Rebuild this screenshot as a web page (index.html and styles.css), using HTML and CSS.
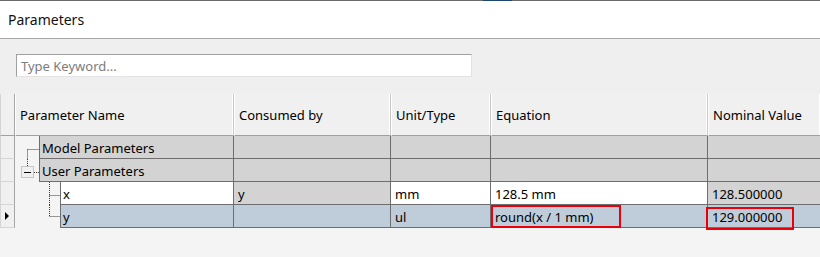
FILE: index.html
```html
<html>
<head>
  <title>Parameters</title>
  <link rel="stylesheet" href="styles.css">
</head>
<body>
  <div class="topline"><span class="tab-mark"></span></div>
  <div class="titlebar">Parameters</div>
  <div class="panel">
    <div class="search">
      <input type="text" placeholder="Type Keyword...">
    </div>
    <div class="grid">
      <!-- header -->
      <div class="rh rh-head"></div>
      <div class="hd">Parameter Name</div>
      <div class="hd">Consumed by</div>
      <div class="hd">Unit/Type</div>
      <div class="hd">Equation</div>
      <div class="hd">Nominal Value</div>

      <!-- Model Parameters -->
      <div class="rh"></div>
      <div class="name">
        <svg class="tree t1" width="24" height="23">
          <line x1="12.5" y1="13.5" x2="24" y2="13.5" />
          <line x1="12.5" y1="13.5" x2="12.5" y2="23" />
        </svg>
        <div class="cell gray first">Model Parameters</div>
      </div>
      <div class="cell gray"></div>
      <div class="cell gray"></div>
      <div class="cell gray"></div>
      <div class="cell gray"></div>

      <!-- User Parameters -->
      <div class="rh"></div>
      <div class="name">
        <svg class="tree t1" width="24" height="23">
          <line x1="12.5" y1="0" x2="12.5" y2="7" />
          <rect x="6.5" y="7.5" width="12" height="11" class="box" />
          <line x1="9" y1="13.5" x2="16" y2="13.5" class="minus" />
          <line x1="19" y1="13.5" x2="24" y2="13.5" />
        </svg>
        <div class="cell gray first">User Parameters</div>
      </div>
      <div class="cell gray"></div>
      <div class="cell gray"></div>
      <div class="cell gray"></div>
      <div class="cell gray"></div>

      <!-- x -->
      <div class="rh"></div>
      <div class="name">
        <svg class="tree t2" width="45" height="23">
          <line x1="34.5" y1="0" x2="34.5" y2="23" />
          <line x1="34.5" y1="13.5" x2="45" y2="13.5" />
        </svg>
        <div class="cell white first">x</div>
      </div>
      <div class="cell gray">y</div>
      <div class="cell white">mm</div>
      <div class="cell white">128.5 mm</div>
      <div class="cell gray">128.500000</div>

      <!-- y -->
      <div class="rh current"><span class="arrow"></span></div>
      <div class="name">
        <svg class="tree t2" width="45" height="23">
          <line x1="34.5" y1="0" x2="34.5" y2="11.5" />
          <line x1="34.5" y1="11.5" x2="45" y2="11.5" />
        </svg>
        <div class="cell sel first">y</div>
      </div>
      <div class="cell sel"></div>
      <div class="cell sel">ul</div>
      <div class="cell sel">round(x / 1 mm)<span class="mark mark-eq"></span></div>
      <div class="cell sel">129.000000<span class="mark mark-nom"></span></div>
    </div>
  </div>
</body>
</html>
```

FILE: styles.css
```css
/* Reset */
body, div, input, span {
  margin: 0;
  padding: 0;
  box-sizing: border-box;
}

body {
  font-family: "Noto Sans", "Open Sans", sans-serif;
  font-size: 13px;
  color: #000;
  background: #f4f4f4;
  width: 820px;
  height: 257px;
  overflow: hidden;
}

/* Top strip */
.topline {
  height: 1px;
  background: #6a6a6a;
  position: relative;
}

.tab-mark {
  position: absolute;
  left: 483px;
  top: 0;
  width: 29px;
  height: 1px;
  background: #1c4670;
}

.titlebar {
  height: 38px;
  background: #fff;
  border-bottom: 1px solid #a5a5a5;
  font-size: 14px;
  padding: 9px 0 0 8px;
  color: #111;
}

/* Panel */
.panel {
  background: #efefef;
}

.search {
  padding: 15px 0 17px 16px;
}

.search input {
  display: block;
  width: 456px;
  height: 23px;
  border: 1px solid;
  border-color: #a0a0a0 #e3e3e3 #e3e3e3 #a0a0a0;
  background: #fff;
  font-family: "Noto Sans", sans-serif;
  font-size: 13px;
  padding: 0 4px;
  outline: none;
}

.search input::placeholder {
  color: #7c7c7c;
}

/* Grid */
.grid {
  display: grid;
  grid-template-columns: 15px 219px 157px 100px 217px 113px;
  grid-template-rows: 42px 23px 23px 23px 23px;
  background: #f4f4f4;
  padding-bottom: 40px;
}

.hd {
  background: #f0f0f0;
  border-right: 1px solid #c9c9c9;
  box-shadow: inset -1px 0 0 #fff;
  border-bottom: 1px solid #a0a0a0;
  border-left: 1px solid #fff;
  padding: 12px 0 0 4px;
}

.rh {
  background: #f0f0f0;
  border-right: 1px solid #a5a5a5;
  border-bottom: 1px solid #d5d5d5;
  border-left: 1px solid #d5d5d5;
  position: relative;
}

.rh-head {
  border-bottom: 1px solid #a0a0a0;
}

.arrow {
  position: absolute;
  left: 4px;
  top: 7px;
  width: 0;
  height: 0;
  border-top: 4px solid transparent;
  border-bottom: 4px solid transparent;
  border-left: 4px solid #000;
}

.name {
  display: flex;
  min-width: 0;
}

.tree {
  flex: none;
  display: block;
}

.tree line {
  stroke: #3a3a3a;
  stroke-width: 1;
  stroke-dasharray: 1 1;
}

.tree .box {
  fill: #f0f0f0;
  stroke: #c6c6c6;
  stroke-width: 1;
}

.tree .minus {
  stroke-dasharray: none;
  stroke: #000;
}

.cell {
  border-right: 1px solid #6e6e6e;
  border-bottom: 1px solid #6e6e6e;
  padding: 3px 0 0 4px;
  white-space: nowrap;
  position: relative;
}

.name .cell {
  flex: 1;
}

.first {
  border-left: 1px solid #6e6e6e;
  padding-left: 2px;
}

.gray {
  background: #d3d3d3;
}

.white {
  background: #fff;
}

.sel {
  background: #bfcddb;
}

/* Red highlight boxes */
.mark {
  position: absolute;
  border: 2px solid #e8000b;
}

.mark-eq {
  left: 0;
  top: 0;
  width: 130px;
  height: 23px;
}

.mark-nom {
  left: -2px;
  top: 2px;
  width: 88px;
  height: 23px;
}
```
